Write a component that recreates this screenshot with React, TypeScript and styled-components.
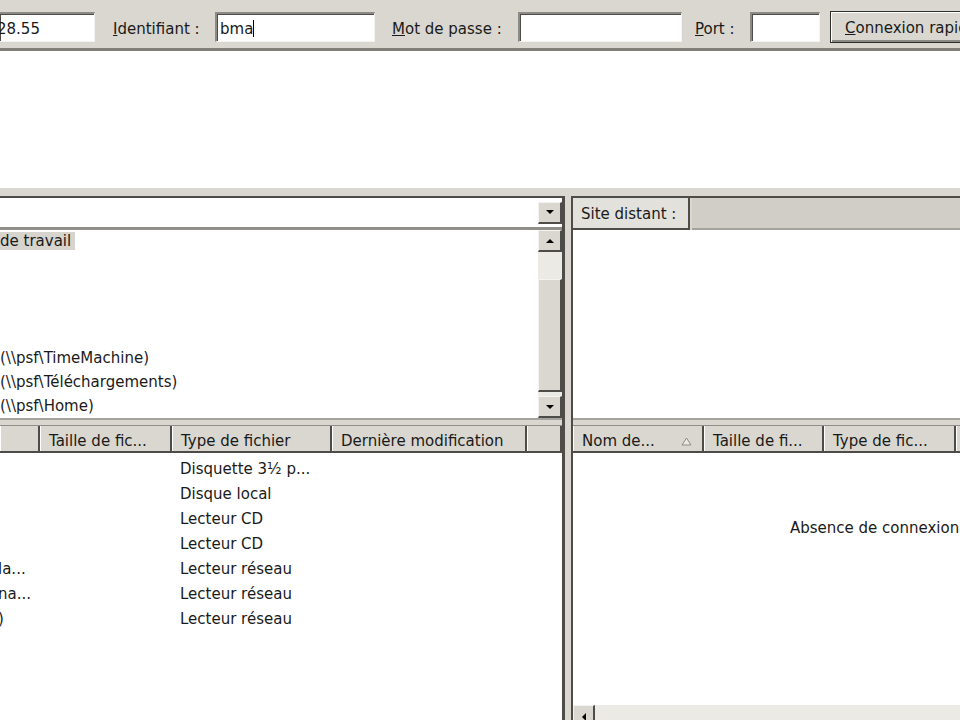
import styled, { createGlobalStyle } from "styled-components";

const face = "#d9d7d0";
const faceLight = "#f4f3ef";
const shade = "#8b8a85";
const dark = "#4d4c49";
const ink = "#1a1a1a";

const GlobalStyle = createGlobalStyle`
  html, body {
    margin: 0;
    padding: 0;
    overflow: hidden;
    background: #ffffff;
  }
  body {
    font-family: "DejaVu Sans", Verdana, sans-serif;
    font-size: 15px;
    color: ${ink};
  }
`;

const Window = styled.div`
  width: 1010px;
  height: 729px;
  display: flex;
  flex-direction: column;
  background: ${face};
`;

// --- barre de connexion rapide ---
const QuickBar = styled.div`
  height: 51px;
  flex-shrink: 0;
  box-sizing: border-box;
  padding-top: 6px;
  display: flex;
  align-items: center;
  white-space: nowrap;
  border-bottom: 3px solid #7f7e79;
`;

const Field = styled.div<{ $w: number }>`
  width: ${({ $w }) => $w}px;
  height: 30px;
  flex-shrink: 0;
  box-sizing: border-box;
  background: #ffffff;
  border-style: solid;
  border-width: 2px 1px 1px 2px;
  border-color: ${shade} ${faceLight} ${faceLight} ${shade};
  box-shadow: inset 1px 1px 0 ${dark};
  display: flex;
  align-items: center;
  padding: 2px 0 0 3px;
  overflow: hidden;
`;

const HostField = styled(Field)`
  border-left: none;
  padding-left: 0;
`;

const HostValue = styled.span`
  margin-left: -3px;
`;

const FieldLabel = styled.span<{ $w: number; $gap: number }>`
  width: ${({ $w }) => $w}px;
  margin-left: ${({ $gap }) => $gap}px;
  padding-top: 3px;
  flex-shrink: 0;
`;

const Caret = styled.span`
  width: 1px;
  height: 17px;
  background: #000000;
`;

const ConnectButton = styled.div`
  width: 170px;
  height: 32px;
  margin-left: 10px;
  flex-shrink: 0;
  box-sizing: border-box;
  padding: 2px 0 0 14px;
  display: flex;
  align-items: center;
  background: ${face};
  border: 1px solid #2e2e2c;
  box-shadow: inset 1px 1px 0 #ffffff, inset -2px -2px 0 ${shade};
`;

// --- journal des messages ---
const LogArea = styled.div`
  height: 137px;
  flex-shrink: 0;
  background: #ffffff;
`;

const RowSplitter = styled.div<{ $h: number }>`
  height: ${({ $h }) => $h}px;
  flex-shrink: 0;
  background: ${face};
`;

const Panes = styled.div`
  flex: 1;
  min-height: 0;
  display: flex;
`;

const LocalColumn = styled.div`
  width: 565px;
  flex-shrink: 0;
  box-sizing: border-box;
  border-right: 3px solid ${dark};
  display: flex;
  flex-direction: column;
`;

const ColumnSplitter = styled.div`
  width: 6px;
  flex-shrink: 0;
  background: ${face};
`;

const RemoteColumn = styled.div`
  flex: 1;
  min-width: 0;
  border-left: 2px solid ${dark};
  display: flex;
  flex-direction: column;
`;

const TopSection = styled.div`
  height: 224px;
  flex-shrink: 0;
  box-sizing: border-box;
  border-top: 2px solid ${dark};
  border-bottom: 2px solid #a3a29c;
  display: flex;
  flex-direction: column;
`;

const PathBar = styled.div`
  height: 32px;
  flex-shrink: 0;
  box-sizing: border-box;
  background: #ffffff;
  border-bottom: 3px solid #8f8e89;
  display: flex;
  align-items: center;
  justify-content: flex-end;
`;

const SiteBar = styled.div`
  height: 32px;
  flex-shrink: 0;
  display: flex;
`;

const SiteLabel = styled.div`
  width: 117px;
  box-sizing: border-box;
  padding: 2px 0 0 8px;
  display: flex;
  align-items: center;
  background: #e3e1db;
  border-right: 2px solid ${dark};
  border-bottom: 2px solid ${dark};
`;

const SiteCombo = styled.div`
  flex: 1;
  margin-left: 2px;
  background: #d0cec7;
  border-bottom: 2px solid #a3a29c;
`;

const ScrollButton = styled.div<{ $w?: number; $h?: number }>`
  width: ${({ $w }) => $w ?? 24}px;
  height: ${({ $h }) => $h ?? 22}px;
  flex-shrink: 0;
  box-sizing: border-box;
  background: ${face};
  border-style: solid;
  border-width: 1px 2px 2px 1px;
  border-color: ${faceLight} ${dark} ${dark} ${faceLight};
  display: flex;
  align-items: center;
  justify-content: center;
`;

const Arrow = styled.span<{ $dir: "up" | "down" | "left" }>`
  width: 0;
  height: 0;
  ${({ $dir }) =>
    $dir === "left"
      ? `border-top: 4px solid transparent; border-bottom: 4px solid transparent; border-right: 4px solid #000;`
      : $dir === "up"
        ? `border-left: 4px solid transparent; border-right: 4px solid transparent; border-bottom: 4px solid #000;`
        : `border-left: 4px solid transparent; border-right: 4px solid transparent; border-top: 4px solid #000;`}
`;

const Tree = styled.div`
  flex: 1;
  min-height: 0;
  display: flex;
  background: #ffffff;
`;

const TreeBody = styled.div`
  flex: 1;
  overflow: hidden;
  white-space: nowrap;
`;

const RootNode = styled.div`
  height: 18px;
  margin-top: 2px;
  display: flex;
  align-items: center;
`;

const Selected = styled.span`
  height: 18px;
  display: flex;
  align-items: center;
  padding-right: 4px;
  background: #d6d4cd;
`;

const TreeRow = styled.div`
  height: 24px;
  display: flex;
  align-items: center;
`;

const VScroll = styled.div`
  width: 24px;
  display: flex;
  flex-direction: column;
  background: #ebeae5;
`;

const Track = styled.div`
  flex: 1;
`;

const Thumb = styled.div`
  height: 113px;
  margin-top: 27px;
  box-sizing: border-box;
  background: ${face};
  border-style: solid;
  border-width: 1px 2px 2px 1px;
  border-color: ${faceLight} ${dark} ${dark} ${faceLight};
`;

// --- listes de fichiers ---
const ListView = styled.div`
  flex: 1;
  min-height: 0;
  display: flex;
  flex-direction: column;
  background: #ffffff;
  overflow: hidden;
`;

const HeaderRow = styled.div<{ $cols: string }>`
  height: 28px;
  flex-shrink: 0;
  box-sizing: border-box;
  display: grid;
  grid-template-columns: ${({ $cols }) => $cols};
  background: ${face};
  border-top: 1px solid #8f8e89;
  border-bottom: 2px solid ${dark};
`;

const HeaderCell = styled.div`
  box-sizing: border-box;
  padding: 5px 10px 0 9px;
  display: flex;
  align-items: center;
  justify-content: space-between;
  white-space: nowrap;
  overflow: hidden;
  border-right: 2px solid ${dark};
  box-shadow: inset 1px 0 0 #ffffff;
`;

const ListBody = styled.div`
  flex: 1;
  padding-top: 3px;
`;

const FileRow = styled.div<{ $cols: string }>`
  height: 25px;
  display: grid;
  grid-template-columns: ${({ $cols }) => $cols};
  align-items: center;
  white-space: nowrap;
`;

const Cell = styled.div`
  padding-left: 8px;
  overflow: hidden;
`;

const NameCell = styled.div`
  overflow: hidden;
  margin-left: -2px;
`;

const EmptyBody = styled.div`
  flex: 1;
  padding: 66px 0 0 217px;
  white-space: nowrap;
`;

const HScroll = styled.div`
  height: 24px;
  flex-shrink: 0;
  display: flex;
  background: #ebeae5;
`;

const localCols = "40px 132px 160px 195px 1fr";
const remoteCols = "131px 120px 132px 1fr";

const drives = [
  { name: "", type: "Disquette 3½ p..." },
  { name: "", type: "Disque local" },
  { name: "", type: "Lecteur CD" },
  { name: "", type: "Lecteur CD" },
  { name: "la...", type: "Lecteur réseau" },
  { name: "na...", type: "Lecteur réseau" },
  { name: ")", type: "Lecteur réseau" },
];

const treeItems = [
  "",
  "",
  "",
  "",
  "(\\\\psf\\TimeMachine)",
  "(\\\\psf\\Téléchargements)",
  "(\\\\psf\\Home)",
];

function SortMark() {
  return (
    <svg width="11" height="9" viewBox="0 0 11 9">
      <polygon points="5.5,1 10,8 1,8" fill="#e9e8e3" stroke="#8d8c87" strokeWidth="1" />
    </svg>
  );
}

function App() {
  return (
    <>
      <GlobalStyle />
      <Window>
        <QuickBar>
          <HostField $w={95}>
            <HostValue>28.55</HostValue>
          </HostField>
          <FieldLabel $w={102} $gap={18}>
            <u>I</u>dentifiant :
          </FieldLabel>
          <Field $w={160}>
            bma
            <Caret />
          </Field>
          <FieldLabel $w={126} $gap={17}>
            <u>M</u>ot de passe :
          </FieldLabel>
          <Field $w={164} />
          <FieldLabel $w={55} $gap={13}>
            <u>P</u>ort :
          </FieldLabel>
          <Field $w={70} />
          <ConnectButton>
            <u>C</u>onnexion rapide
          </ConnectButton>
        </QuickBar>

        <LogArea />
        <RowSplitter $h={8} />

        <Panes>
          <LocalColumn>
            <TopSection>
              <PathBar>
                <ScrollButton>
                  <Arrow $dir="down" />
                </ScrollButton>
              </PathBar>
              <Tree>
                <TreeBody>
                  <RootNode>
                    <Selected>de travail</Selected>
                  </RootNode>
                  {treeItems.map((label, i) => (
                    <TreeRow key={i}>{label}</TreeRow>
                  ))}
                </TreeBody>
                <VScroll>
                  <ScrollButton>
                    <Arrow $dir="up" />
                  </ScrollButton>
                  <Track>
                    <Thumb />
                  </Track>
                  <ScrollButton>
                    <Arrow $dir="down" />
                  </ScrollButton>
                </VScroll>
              </Tree>
            </TopSection>
            <RowSplitter $h={5} />
            <ListView>
              <HeaderRow $cols={localCols}>
                <HeaderCell />
                <HeaderCell>Taille de fic...</HeaderCell>
                <HeaderCell>Type de fichier</HeaderCell>
                <HeaderCell>Dernière modification</HeaderCell>
                <HeaderCell />
              </HeaderRow>
              <ListBody>
                {drives.map((d, i) => (
                  <FileRow key={i} $cols={localCols}>
                    <NameCell>{d.name}</NameCell>
                    <Cell />
                    <Cell>{d.type}</Cell>
                    <Cell />
                    <Cell />
                  </FileRow>
                ))}
              </ListBody>
            </ListView>
          </LocalColumn>

          <ColumnSplitter />

          <RemoteColumn>
            <TopSection>
              <SiteBar>
                <SiteLabel>Site distant :</SiteLabel>
                <SiteCombo />
              </SiteBar>
              <Tree />
            </TopSection>
            <RowSplitter $h={5} />
            <ListView>
              <HeaderRow $cols={remoteCols}>
                <HeaderCell>
                  Nom de...
                  <SortMark />
                </HeaderCell>
                <HeaderCell>Taille de fi...</HeaderCell>
                <HeaderCell>Type de fic...</HeaderCell>
                <HeaderCell />
              </HeaderRow>
              <EmptyBody>Absence de connexion</EmptyBody>
              <HScroll>
                <ScrollButton $w={22} $h={24}>
                  <Arrow $dir="left" />
                </ScrollButton>
              </HScroll>
            </ListView>
          </RemoteColumn>
        </Panes>
      </Window>
    </>
  );
}

export default App;
